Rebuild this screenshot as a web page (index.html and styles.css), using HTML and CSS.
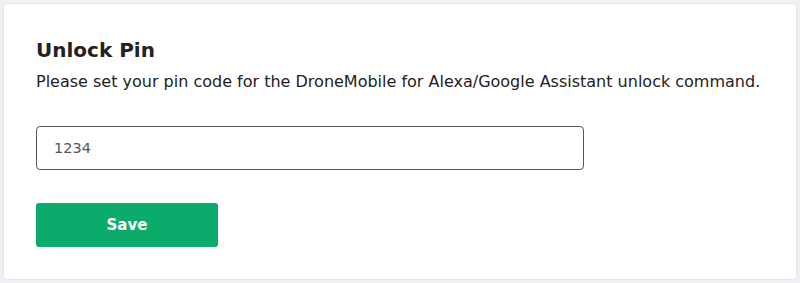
FILE: index.html
```html
<!DOCTYPE html>
<html lang="en">
<head>
<meta charset="utf-8">
<title>Unlock Pin</title>
<link rel="stylesheet" href="styles.css">
</head>
<body>
<div class="page">
  <section class="card">
    <h2 class="title">Unlock Pin</h2>
    <p class="desc">Please set your pin code for the DroneMobile for Alexa/Google Assistant unlock command.</p>
    <input class="pin" type="text" value="1234">
    <button class="save" type="button">Save</button>
  </section>
</div>
</body>
</html>
```

FILE: styles.css
```css
html, body {
  margin: 0;
  padding: 0;
}
body {
  background: #eef0f3;
  font-family: "DejaVu Sans", "Liberation Sans", sans-serif;
  color: #222;
  width: 800px;
  height: 283px;
  overflow: hidden;
}
.page {
  padding: 3px 3px 3px 3px;
  box-sizing: border-box;
  height: 283px;
}
.card {
  box-sizing: border-box;
  height: 277px;
  background: #fff;
  border: 1px solid #e3e6ea;
  border-radius: 4px;
  padding: 33px 33px 0 32px;
  display: flex;
  flex-direction: column;
  align-items: flex-start;
}
.title {
  margin: 0;
  font-size: 20px;
  font-weight: 700;
  line-height: 26px;
  color: #222;
}
.desc {
  margin: 8px 0 0 0;
  font-size: 16px;
  line-height: 22px;
  color: #222;
}
.pin {
  margin-top: 33px;
  box-sizing: border-box;
  width: 548px;
  height: 44px;
  border: 1px solid #555;
  border-radius: 4px;
  padding: 0 17px;
  font-family: inherit;
  font-size: 14.5px;
  color: #555;
  outline: none;
}
.save {
  margin-top: 33px;
  box-sizing: border-box;
  width: 182px;
  height: 44px;
  border: none;
  border-radius: 3px;
  background: #0aab6b;
  color: #fff;
  font-family: inherit;
  font-size: 15px;
  font-weight: 700;
  cursor: pointer;
}
```
